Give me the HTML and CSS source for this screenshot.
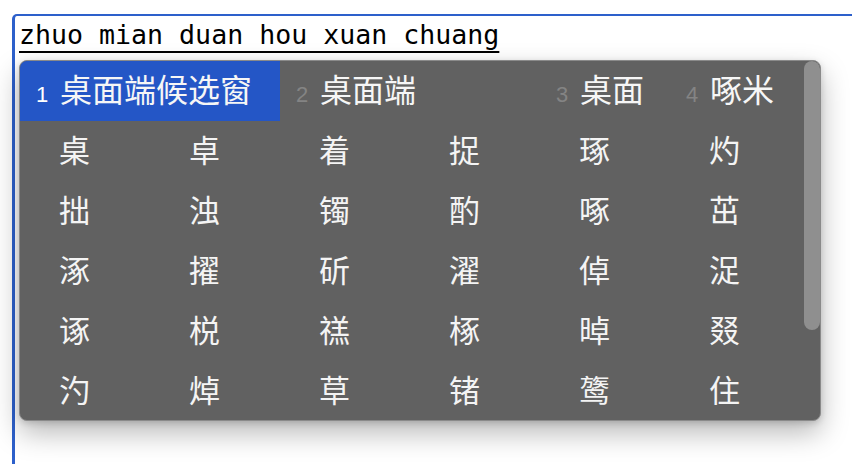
FILE: index.html
```html
<!DOCTYPE html>
<html lang="zh">
<head>
<meta charset="utf-8">
<title>IME candidate window</title>
<link rel="stylesheet" href="styles.css">
</head>
<body>
<div class="editor">
  <span class="composition">zhuo mian duan hou xuan chuang</span>
</div>
<div class="candidates">
  <div class="grid">
    <div class="cand span2 selected"><span class="num">1</span><span class="word">桌面端候选窗</span></div>
    <div class="cand span2"><span class="num">2</span><span class="word">桌面端</span></div>
    <div class="cand"><span class="num">3</span><span class="word">桌面</span></div>
    <div class="cand"><span class="num">4</span><span class="word">啄米</span></div>
    <div class="cell">桌</div><div class="cell">卓</div><div class="cell">着</div><div class="cell">捉</div><div class="cell">琢</div><div class="cell">灼</div>
    <div class="cell">拙</div><div class="cell">浊</div><div class="cell">镯</div><div class="cell">酌</div><div class="cell">啄</div><div class="cell">茁</div>
    <div class="cell">涿</div><div class="cell">擢</div><div class="cell">斫</div><div class="cell">濯</div><div class="cell">倬</div><div class="cell">浞</div>
    <div class="cell">诼</div><div class="cell">棁</div><div class="cell">禚</div><div class="cell">椓</div><div class="cell">晫</div><div class="cell">叕</div>
    <div class="cell">汋</div><div class="cell">焯</div><div class="cell">草</div><div class="cell">锗</div><div class="cell">𬸦</div><div class="cell">住</div>
  </div>
  <div class="track"><div class="thumb"></div></div>
</div>
</body>
</html>
```

FILE: styles.css
```css
html, body {
  margin: 0;
  padding: 0;
  background: #ffffff;
  overflow: hidden;
  width: 852px;
  height: 464px;
}

.editor {
  margin: 14px 0 0 12px;
  height: 450px;
  width: 840px;
  border-top: 2px solid #2d60cb;
  border-left: 3px solid #2d60cb;
  border-top-left-radius: 5px;
  padding: 3px 0 0 4px;
  box-sizing: border-box;
}

.composition {
  font-family: "DejaVu Sans Mono", monospace;
  font-size: 26.6px;
  line-height: 31px;
  color: #000;
  text-decoration: underline;
  text-decoration-thickness: 2px;
  text-underline-offset: 7px;
}

.candidates {
  position: absolute;
  left: 19px;
  top: 60px;
  width: 802px;
  height: 361px;
  box-sizing: border-box;
  border: 1px solid #8a8a8a;
  border-radius: 8px;
  background: #616161;
  box-shadow: 0 12px 28px rgba(0, 0, 0, 0.28), 0 2px 6px rgba(0, 0, 0, 0.15);
  overflow: hidden;
  display: flex;
}

.grid {
  display: grid;
  grid-template-columns: repeat(6, 130px);
  grid-auto-rows: 60px;
  width: 780px;
  flex: none;
}

.cand {
  display: flex;
  align-items: baseline;
  padding-left: 16px;
  padding-top: 9px;
  box-sizing: border-box;
  font-family: "Noto Sans CJK SC", "Noto Sans", sans-serif;
  color: #f6f6f6;
}

.span2 { grid-column: span 2; }

.cand.selected {
  background: #2456c6;
}

.num {
  font-family: "Liberation Sans", Arial, sans-serif;
  font-size: 22px;
  width: 24px;
  color: #848484;
}

.selected .num {
  color: #ffffff;
}

.word {
  font-size: 32px;
  line-height: 36px;
}

.cell {
  display: flex;
  align-items: center;
  padding-left: 39px;
  padding-bottom: 6px;
  box-sizing: border-box;
  font-family: "Noto Sans CJK SC", "Noto Sans", sans-serif;
  font-size: 31px;
  color: #f4f4f4;
}

.track {
  flex: 1;
  display: flex;
  justify-content: flex-end;
}

.thumb {
  width: 16px;
  height: 269px;
  background: #8f8f8f;
  border-radius: 8px;
}
```
